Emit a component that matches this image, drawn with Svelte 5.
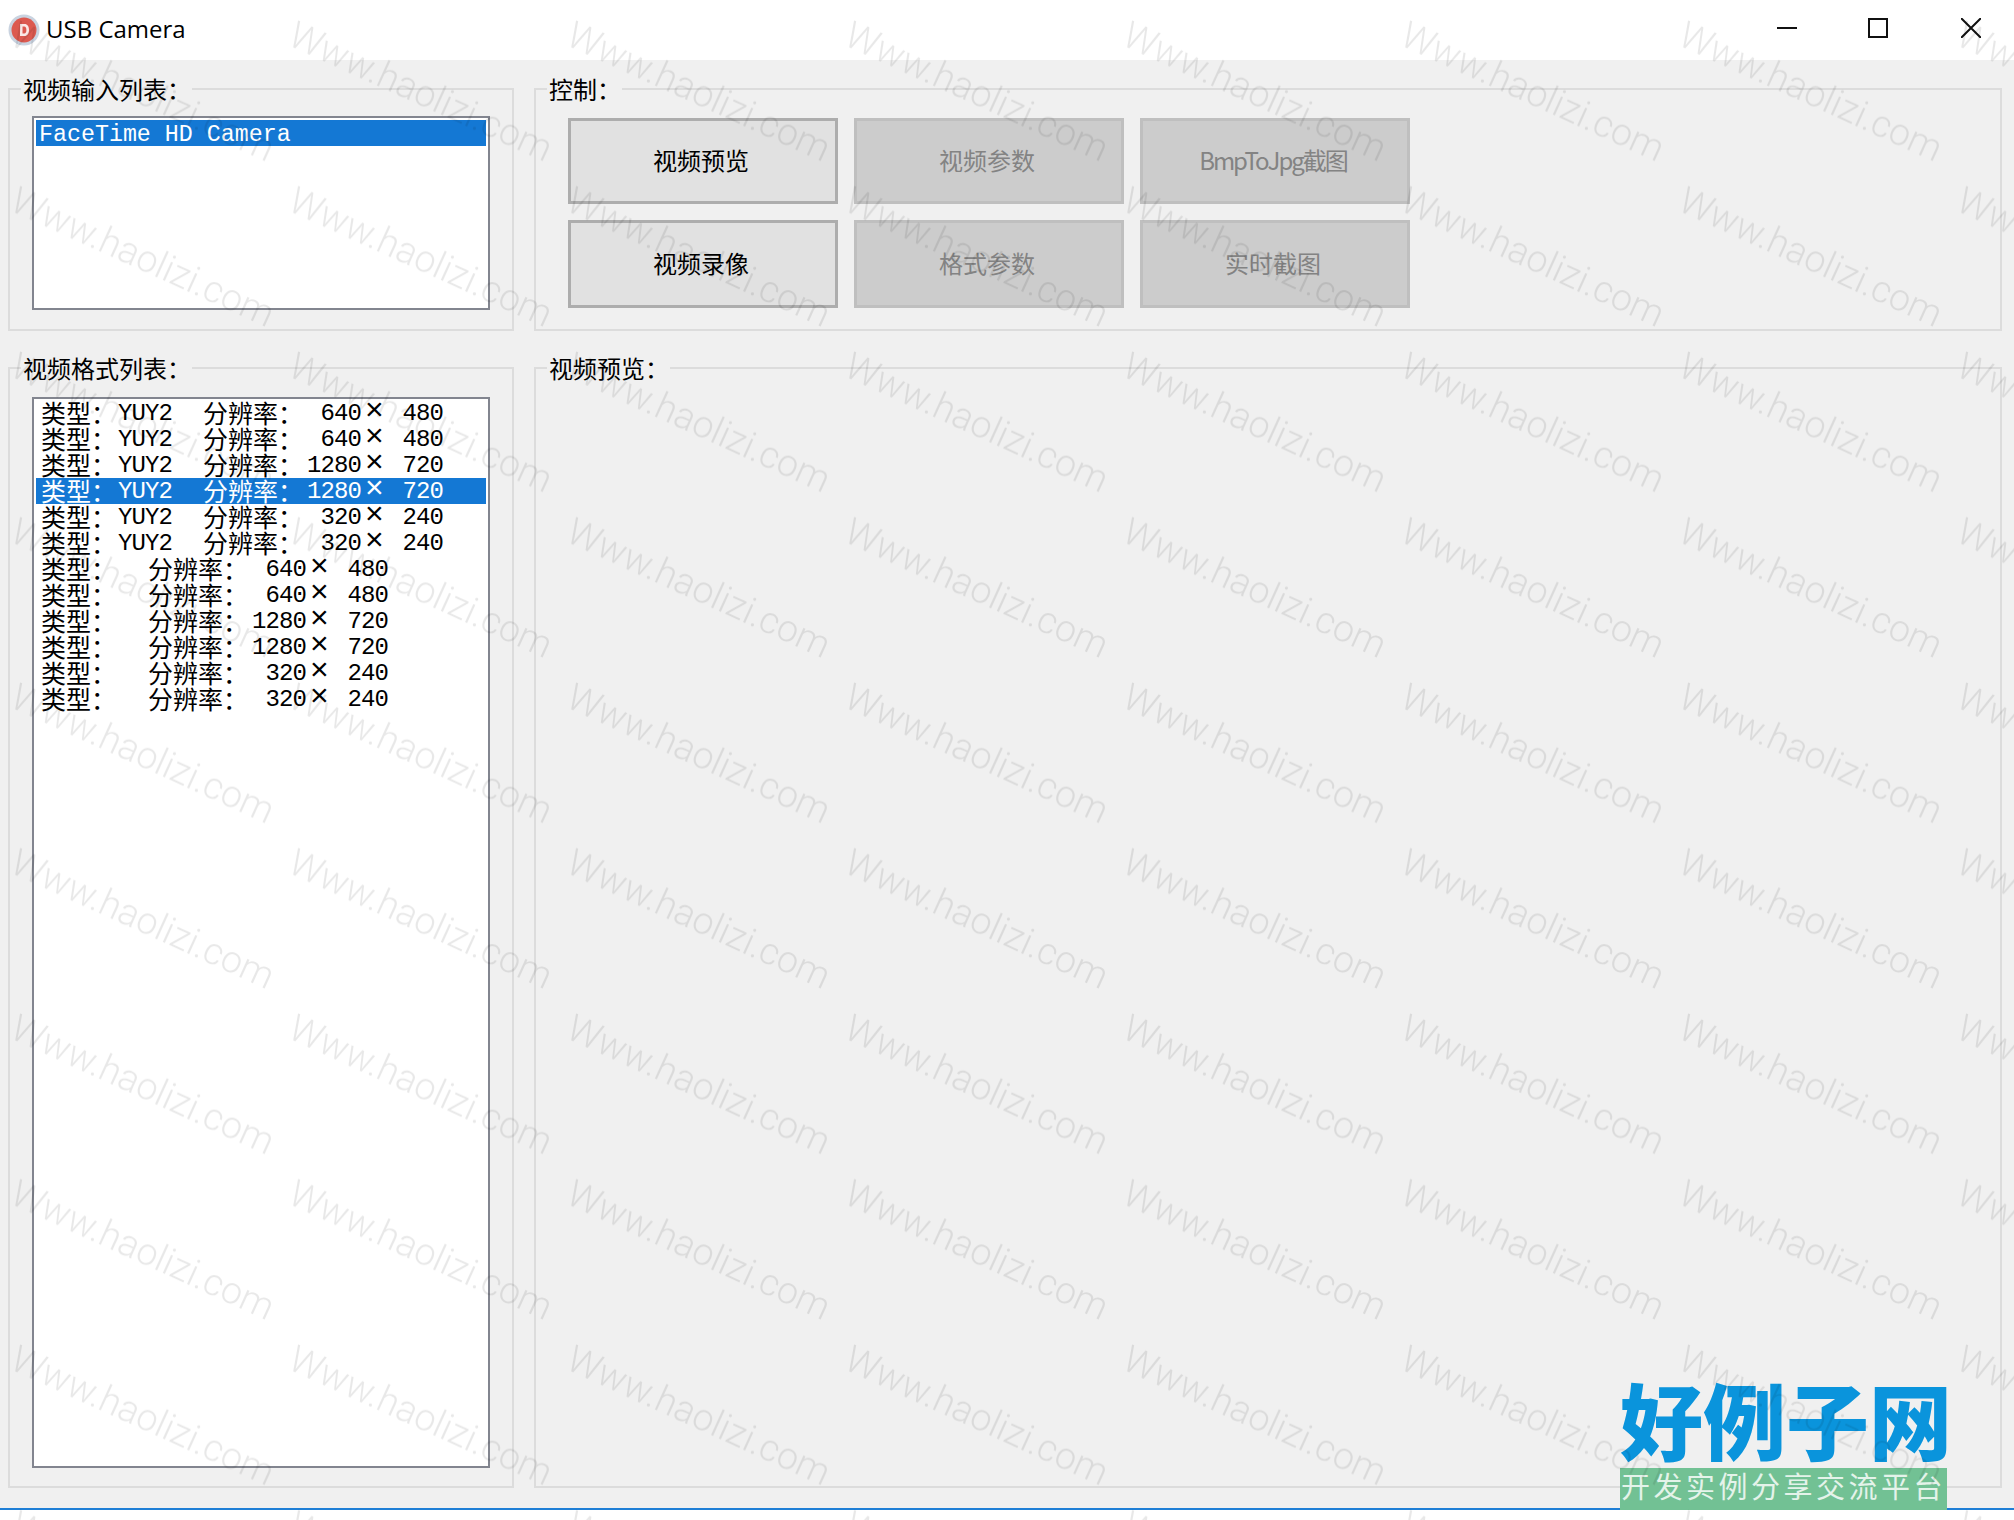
<script>
  const topButtons = [
    { label: '视频预览', enabled: true },
    { label: '视频参数', enabled: false },
    { label: 'BmpToJpg截图', enabled: false, narrow: true },
    { label: '视频录像', enabled: true },
    { label: '格式参数', enabled: false },
    { label: '实时截图', enabled: false },
  ];

  const formats = [
    { fourcc: 'YUY2', w: 640, h: 480 },
    { fourcc: 'YUY2', w: 640, h: 480 },
    { fourcc: 'YUY2', w: 1280, h: 720 },
    { fourcc: 'YUY2', w: 1280, h: 720, selected: true },
    { fourcc: 'YUY2', w: 320, h: 240 },
    { fourcc: 'YUY2', w: 320, h: 240 },
    { fourcc: '', w: 640, h: 480 },
    { fourcc: '', w: 640, h: 480 },
    { fourcc: '', w: 1280, h: 720 },
    { fourcc: '', w: 1280, h: 720 },
    { fourcc: '', w: 320, h: 240 },
    { fourcc: '', w: 320, h: 240 },
  ];
</script>

<div class="window">
  <header class="titlebar">
    <svg class="app-icon" width="32" height="32" viewBox="0 0 32 32">
      <circle cx="16" cy="16" r="15.5" fill="#c9d3e0" />
      <circle cx="16" cy="16" r="12.5" fill="#dc5a50" />
      <path d="M12 10h4.500c3 0 4.500 2.500 4.500 6s-1.500 6-4.500 6H12z M14.500 12.500v7h1.700c1.500 0 2.200-1.500 2.200-3.500s-.7-3.500-2.200-3.500z" fill="#fbe9e6" fill-rule="evenodd" />
    </svg>
    <span class="title">USB Camera</span>
    <div class="caption-buttons">
      <svg width="20" height="20" viewBox="0 0 20 20"><path d="M0 10h20" stroke="#111" stroke-width="2" /></svg>
      <svg width="20" height="20" viewBox="0 0 20 20"><rect x="1" y="1" width="18" height="18" fill="none" stroke="#111" stroke-width="2" /></svg>
      <svg class="close" width="20" height="20" viewBox="0 0 20 20"><path d="M0 0l20 20M20 0L0 20" stroke="#111" stroke-width="2" /></svg>
    </div>
  </header>

  <main class="content">
    <fieldset class="group">
      <legend>视频输入列表：</legend>
      <div class="listbox input-list" role="listbox">
        <div class="item selected mono" role="option" aria-selected="true">FaceTime HD Camera</div>
      </div>
    </fieldset>

    <fieldset class="group">
      <legend>控制：</legend>
      <div class="controls">
        {#each topButtons as btn}
          <button type="button" class="btn" class:narrow={btn.narrow} disabled={!btn.enabled}>{btn.label}</button>
        {/each}
      </div>
    </fieldset>

    <fieldset class="group lower">
      <legend>视频格式列表：</legend>
      <div class="listbox format-list" role="listbox">
        {#each formats as f}
          <div class="item row" class:selected={f.selected} role="option" aria-selected={!!f.selected}>
            <span class="kind">类型：</span>
            {#if f.fourcc}<span class="fourcc mono">{f.fourcc}</span>{/if}
            <span class="res-label">分辨率：</span>
            <span class="width mono">{f.w}</span>
            <span class="times">×</span>
            <span class="height mono">{f.h}</span>
          </div>
        {/each}
      </div>
    </fieldset>

    <fieldset class="group lower">
      <legend>视频预览：</legend>
    </fieldset>
  </main>

  <div class="statusline"></div>

  <div class="brand">
    <div class="brand-name">好例子网</div>
    <div class="brand-sub">开发实例分享交流平台</div>
  </div>

  <svg class="watermark" width="2014" height="1520" aria-hidden="true">
    <defs>
      <pattern id="wm" width="278" height="165.500" patternUnits="userSpaceOnUse">
        <text transform="translate(8 44) rotate(24.500)">Www.haolizi.com</text>
      </pattern>
    </defs>
    <rect width="2014" height="1520" fill="url(#wm)" />
  </svg>
</div>

<style>
  :global(body) {
    margin: 0;
    background: #fff;
  }
  .window {
    position: relative;
    width: 2014px;
    height: 1520px;
    overflow: hidden;
    background: #fff;
    font-family: "Noto Sans CJK SC", "Liberation Sans", sans-serif;
    color: #000;
  }
  .titlebar {
    display: flex;
    align-items: center;
    height: 60px;
    padding-left: 8px;
    box-sizing: border-box;
  }
  .app-icon {
    margin-right: 6px;
  }
  .title {
    margin-top: -4px;
    font-family: "Open Sans", "Noto Sans", sans-serif;
    font-size: 24px;
    color: #000;
  }
  .caption-buttons {
    display: flex;
    gap: 71px;
    margin-left: auto;
    margin-right: 33px;
    margin-top: -4px;
  }
  .caption-buttons svg {
    display: block;
  }
  .caption-buttons .close {
    margin-left: 2px;
  }
  .content {
    display: grid;
    grid-template-columns: 506px 1468px;
    grid-template-rows: 256px 1134px;
    column-gap: 20px;
    row-gap: 23px;
    height: 1448px;
    box-sizing: border-box;
    padding: 15px 0 0 8px;
    background: #f0f0f0;
  }
  .group {
    margin: 0;
    padding: 13px 20px 0 22px;
    min-width: 0;
    border: 2px solid #dcdcdc;
  }
  .group.lower {
    padding-top: 15px;
  }
  legend {
    margin-left: -11px;
    padding: 0 1px 0 2px;
    font-size: 24px;
    line-height: 28px;
  }
  .listbox {
    box-sizing: border-box;
    width: 458px;
    padding: 2px;
    background: #fff;
    border: 2px solid #82858f;
  }
  .input-list {
    height: 194px;
  }
  .format-list {
    height: 1071px;
    padding-top: 1px;
  }
  .item {
    height: 26px;
    line-height: 26px;
    white-space: nowrap;
  }
  .item.selected {
    background: #1478d4;
    color: #fff;
  }
  .mono {
    font-family: "Liberation Mono", monospace;
  }
  .input-list .item {
    padding-left: 3px;
    font-size: 23.300px;
    line-height: 31px;
  }
  .row {
    display: flex;
    padding-left: 5px;
    font-size: 25px;
  }
  .kind,
  .res-label {
    line-height: 24px;
  }
  .kind {
    width: 77px;
  }
  .fourcc,
  .width,
  .height {
    font-size: 24px;
    line-height: 28px;
    letter-spacing: -0.9px;
  }
  .fourcc {
    width: 55px;
  }
  .res-label {
    width: 92px;
    margin-left: 30px;
  }
  .width {
    width: 66px;
    text-align: right;
  }
  .times {
    width: 15px;
    margin-left: 4px;
    margin-right: 3px;
    font-family: "Liberation Sans", sans-serif;
    font-size: 32px;
    line-height: 19px;
  }
  .height {
    width: 60px;
    text-align: right;
  }
  .controls {
    display: grid;
    grid-template-columns: repeat(3, 270px);
    grid-template-rows: 86px 88px;
    gap: 16px;
    padding: 2px 0 0 10px;
  }
  .btn {
    padding: 0 4px 4px 0;
    font-family: inherit;
    font-size: 24px;
    color: #000;
    background: #e1e1e1;
    border: 3px solid #adadad;
  }
  .btn:disabled {
    color: #838383;
    background: #cccccc;
    border-color: #bfbfbf;
  }
  .btn.narrow {
    letter-spacing: -2px;
  }
  .statusline {
    height: 2px;
    background: #1f7fd6;
  }
  .brand {
    position: absolute;
    left: 1620px;
    top: 1372px;
    width: 327px;
  }
  .brand-name {
    margin-bottom: 4px;
    font-size: 83px;
    font-weight: 900;
    line-height: 92px;
    color: #0a94dc;
    white-space: nowrap;
  }
  .brand-sub {
    height: 42px;
    line-height: 35px;
    background: #72c194;
    color: #e4f3ea;
    font-size: 29px;
    letter-spacing: 3.500px;
    text-align: center;
    white-space: nowrap;
  }
  .watermark {
    position: absolute;
    left: 0;
    top: 0;
    pointer-events: none;
  }
  .watermark text {
    font-family: Roboto, sans-serif;
    font-weight: 300;
    font-size: 37.500px;
    fill: rgba(0, 0, 0, 0.09);
  }
</style>
